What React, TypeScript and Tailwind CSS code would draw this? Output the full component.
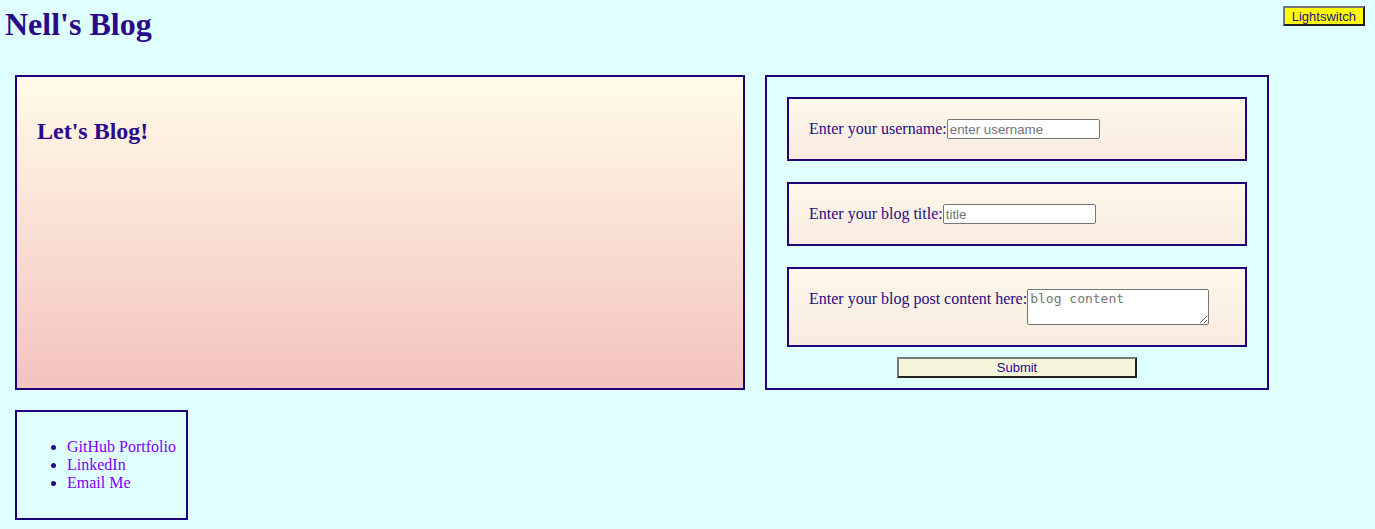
const links = ['GitHub Portfolio', 'LinkedIn', 'Email Me'];

const fieldBox =
  'flex items-start p-[20px] border-2 border-[#1f0078] bg-gradient-to-b from-[#fdf9e9] to-[#f8eadf]';

const App = () => {
  return (
    <div className="min-h-screen bg-[#e0ffff] text-[#2a0a8a] font-['Liberation_Serif',serif] pb-[10px]">
      <header className="flex justify-between items-start pt-[6px] pl-[5px] pr-[10px]">
        <h1 className="text-[32px] font-bold leading-[37px]">Nell's Blog</h1>
        <button className="h-[20px] px-[7px] bg-[#ffff00] border-2 border-t-[#777] border-l-[#777] border-b-[#222] border-r-[#222] text-[13px] leading-none text-[#2a0a8a] font-['Liberation_Sans',sans-serif]">
          Lightswitch
        </button>
      </header>

      <main className="flex items-stretch gap-[20px] pl-[15px] mt-[32px]">
        <section className="w-[730px] border-2 border-[#1f0078] bg-gradient-to-b from-[#fffbe9] to-[#f3c3be] px-[20px] pt-[40px]">
          <h2 className="text-[24px] font-bold leading-[28px]">Let's Blog!</h2>
        </section>

        <form
          className="w-[504px] border-2 border-[#1f0078] p-[20px] pb-[10px] flex flex-col"
          onSubmit={(e) => e.preventDefault()}
        >
          <div className={fieldBox}>
            <label className="text-[16px] leading-[18px] pt-px">Enter your username:</label>
            <input
              placeholder="enter username"
              className="w-[153px] h-[20px] bg-white border border-[#767676] rounded-[2px] px-[2px] text-[13.33px] font-['Liberation_Sans',sans-serif] placeholder:text-[#757575] outline-none"
            />
          </div>

          <div className={`${fieldBox} mt-[21px]`}>
            <label className="text-[16px] leading-[18px] pt-px">Enter your blog title:</label>
            <input
              placeholder="title"
              className="w-[153px] h-[20px] bg-white border border-[#767676] rounded-[2px] px-[2px] text-[13.33px] font-['Liberation_Sans',sans-serif] placeholder:text-[#757575] outline-none"
            />
          </div>

          <div className={`${fieldBox} mt-[21px]`}>
            <label className="text-[16px] leading-[18px] pt-px">Enter your blog post content here:</label>
            <textarea
              placeholder="blog content"
              className="w-[182px] h-[36px] bg-white border border-[#767676] rounded-[2px] px-[2px] py-px text-[13px] leading-[15px] font-['DejaVu_Sans_Mono',monospace] placeholder:text-[#757575] outline-none"
            />
          </div>

          <button
            type="submit"
            className="self-center mt-[10px] w-[240px] h-[21px] bg-[#f5f5dc] border-2 border-t-[#777] border-l-[#777] border-b-[#222] border-r-[#222] text-[13px] leading-none text-[#2a0a8a] font-['Liberation_Sans',sans-serif]"
          >
            Submit
          </button>
        </form>
      </main>

      <footer className="ml-[15px] mt-[20px] w-fit border-2 border-[#1f0078] p-[10px]">
        <ul className="list-disc pl-[40px] my-[16px] text-[16px] leading-[18px]">
          {links.map((name) => (
            <li key={name}>
              <a href="#" className="text-[#7f00ff]">
                {name}
              </a>
            </li>
          ))}
        </ul>
      </footer>
    </div>
  );
};

export default App;
